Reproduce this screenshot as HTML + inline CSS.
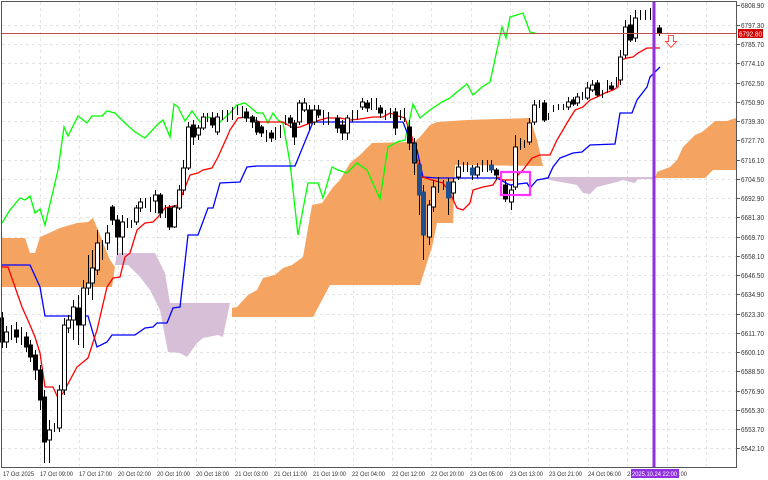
<!DOCTYPE html>
<html><head><meta charset="utf-8"><style>
html,body{margin:0;padding:0;background:#fff;}
svg{display:block;font-family:"Liberation Sans",sans-serif;}
</style></head><body>
<svg width="768" height="480" viewBox="0 0 768 480" xmlns="http://www.w3.org/2000/svg">
<rect width="768" height="480" fill="#fff"/>
<g stroke="#e4e4e4" stroke-width="1" stroke-dasharray="3,3">
<line x1="40.5" y1="2" x2="40.5" y2="466"/><line x1="79.5" y1="2" x2="79.5" y2="466"/><line x1="118.5" y1="2" x2="118.5" y2="466"/><line x1="157.5" y1="2" x2="157.5" y2="466"/><line x1="196.5" y1="2" x2="196.5" y2="466"/><line x1="235.5" y1="2" x2="235.5" y2="466"/><line x1="275.5" y1="2" x2="275.5" y2="466"/><line x1="314.5" y1="2" x2="314.5" y2="466"/><line x1="353.5" y1="2" x2="353.5" y2="466"/><line x1="392.5" y1="2" x2="392.5" y2="466"/><line x1="431.5" y1="2" x2="431.5" y2="466"/><line x1="471.5" y1="2" x2="471.5" y2="466"/><line x1="510.5" y1="2" x2="510.5" y2="466"/><line x1="549.5" y1="2" x2="549.5" y2="466"/><line x1="588.5" y1="2" x2="588.5" y2="466"/><line x1="627.5" y1="2" x2="627.5" y2="466"/><line x1="667.5" y1="2" x2="667.5" y2="466"/><line x1="706.5" y1="2" x2="706.5" y2="466"/>
<line x1="2" y1="25.5" x2="736" y2="25.5"/><line x1="2" y1="44.5" x2="736" y2="44.5"/><line x1="2" y1="63.5" x2="736" y2="63.5"/><line x1="2" y1="83.5" x2="736" y2="83.5"/><line x1="2" y1="102.5" x2="736" y2="102.5"/><line x1="2" y1="121.5" x2="736" y2="121.5"/><line x1="2" y1="140.5" x2="736" y2="140.5"/><line x1="2" y1="160.5" x2="736" y2="160.5"/><line x1="2" y1="179.5" x2="736" y2="179.5"/><line x1="2" y1="198.5" x2="736" y2="198.5"/><line x1="2" y1="217.5" x2="736" y2="217.5"/><line x1="2" y1="237.5" x2="736" y2="237.5"/><line x1="2" y1="256.5" x2="736" y2="256.5"/><line x1="2" y1="275.5" x2="736" y2="275.5"/><line x1="2" y1="294.5" x2="736" y2="294.5"/><line x1="2" y1="314.5" x2="736" y2="314.5"/><line x1="2" y1="333.5" x2="736" y2="333.5"/><line x1="2" y1="352.5" x2="736" y2="352.5"/><line x1="2" y1="371.5" x2="736" y2="371.5"/><line x1="2" y1="391.5" x2="736" y2="391.5"/><line x1="2" y1="410.5" x2="736" y2="410.5"/><line x1="2" y1="429.5" x2="736" y2="429.5"/><line x1="2" y1="448.5" x2="736" y2="448.5"/>
</g>
<g fill="#f4a460">
<polygon points="2,238 25,238 30,253 35,253 40,237 47,234 60,228 77,223 88,222 93,218 98,230 110,260 115,267 112,287 2,287"/>
<polygon points="232,308 237,307 248,295 257,290 263,278 275,275 283,268 292,265 303,257 312,205 322,203 333,187 340,180 350,163 360,155 372,143 408,142 413,143 420,137 430,125 437,122 467,120 530,118 537,140 543,166 455,165 453,223 437,223 432,247 420,285 330,285 313,317 232,317"/>
<polygon points="655,178 657,172 670,167 677,160 683,147 690,140 695,135 702,132 707,128 715,121 727,121 736,118 736,170 713,170 705,178"/>
</g>
<g fill="#d8bfd8">
<polygon points="115,265 117,253 155,253 165,273 170,303 230,303 223,337 218,335 203,338 197,343 187,357 180,353 168,352 160,310 150,290 140,277 128,265"/>
<polygon points="543,177 623,177 653,177 653,179 638,179 635,183 630,182 623,180 617,182 597,187 590,194 583,193 577,185 550,180"/>
</g>
<polyline fill="none" stroke="#00ff00" stroke-width="1.3" points="2,223 10,210 20,198 25,200 30,196 35,213 40,209 45,225 58,170 64,127 68,136 78,116 87,123 92,116 102,116 107,111 115,113 125,123 135,132 145,138 157,125 163,120 170,137 174,104 178,107 185,121 192,111 200,122 208,117 220,122 230,113 237,105 245,103 250,107 257,113 263,113 268,123 273,113 278,120 283,123 290,163 298,235 308,183 318,183 323,198 332,167 338,170 347,173 357,163 367,170 380,199 388,147 397,142 405,140 413,104 420,118 430,110 442,102 450,98 457,92 467,84 473,95 482,87 490,82 497,50 502,27 506,38 510,17 523,13 530,32 535,33"/>
<polyline fill="none" stroke="#0000ff" stroke-width="1.3" points="2,265 30,265 40,287 45,316 88,316 97,347 107,342 112,335 135,335 145,328 153,327 157,323 167,323 173,308 180,307 188,235 198,235 208,208 213,208 220,183 240,182 247,167 257,166 295,166 313,122 403,122 410,140 417,150 423,177 437,178 497,178 510,185 527,183 530,188 537,180 548,178 553,167 560,158 573,153 582,152 590,145 615,144 620,113 632,113 637,100 647,87 650,77 660,67"/>
<polyline fill="none" stroke="#ff0000" stroke-width="1.3" points="2,267 8,267 15,287 22,307 30,325 35,337 40,353 45,387 53,387 58,398 63,393 77,367 88,358 97,330 107,287 113,278 120,277 125,257 130,253 137,230 145,223 153,222 158,217 165,208 178,205 190,175 198,173 203,170 212,168 218,157 227,137 230,130 238,118 247,117 260,122 273,122 283,122 293,128 300,127 313,122 327,118 340,118 350,120 360,119 373,117 383,117 390,113 398,116 405,118 412,137 415,150 418,163 422,177 432,180 443,183 450,193 457,208 463,210 470,203 473,190 483,187 493,185 498,177 503,180 513,180 523,170 532,158 540,155 550,155 557,140 567,123 575,110 583,107 590,100 597,97 605,93 613,90 618,87 621,60 627,58 633,57 638,53 647,48 660,48"/>
<g stroke="#000" stroke-width="1" fill="#fff">
<path fill="none" d="M2.5 312V348M6.5 326V348M11.5 325V340M16.5 322V343M21.5 327V345M26.5 332V352M30.5 340V362M35.5 350V380M40.5 365V410M44.5 390V463M49.5 420V463M54.5 423V432M59.5 385V432M64.5 318V395M68.5 315V333M73.5 300V340M78.5 295V345M83.5 280V348M88.5 255V295M92.5 250V300M97.5 230V275M102.5 240V260M107.5 225V250M112.5 205V225M117.5 215V255M122.5 215V255M127.5 218V228M131.5 220V228M136.5 205V225M140.5 198V212M145.5 198V208M150.5 197V212M155.5 190V213M160.5 193V218M165.5 205V218M169.5 205V230M174.5 205V228M179.5 185V210M183.5 160V195M188.5 122V170M193.5 120V145M198.5 125V140M203.5 113V130M207.5 113V122M212.5 112V128M217.5 113V135M222.5 110V120M227.5 110V122M232.5 107V120M237.5 105V115M242.5 106V118M246.5 108V122M252.5 115V128M256.5 117V135M261.5 125V137M266.5 130V142M271.5 130V142M275.5 127V140M280.5 125V138M285.5 115V125M290.5 115V128M294.5 120V145M299.5 100V125M304.5 98V112M309.5 105V130M314.5 105V125M318.5 105V118M323.5 110V125M328.5 112V125M337.5 115V133M342.5 120V140M347.5 115V140M352.5 110V122M357.5 110V120M362.5 98V110M367.5 100V112M371.5 98V110M376.5 98V110M380.5 105V118M385.5 110V120M390.5 108V118M395.5 108V135M400.5 110V120M404.5 108V122M409.5 120V150M414.5 138V175M419.5 160V215M423.5 185V260M429.5 200V245M433.5 180V212M438.5 177V193M443.5 180V190M448.5 178V215M453.5 178V200M458.5 160V180M463.5 162V172M467.5 162V172M472.5 165V180M477.5 163V178M482.5 160V172M487.5 160V172M491.5 160V173M496.5 168V180M505.5 180V202M511.5 185V210M515.5 135V190M520.5 138V150M524.5 140V148M529.5 118V145M534.5 100V125M539.5 100V108M544.5 100V122M548.5 113V120M553.5 105V112M558.5 104V110M563.5 104V110M568.5 97V110M573.5 97V106M577.5 93V106M582.5 92V100M587.5 82V100M592.5 80V92M597.5 80V97M602.5 90V98M607.5 80V93M611.5 82V90M616.5 77V87M620.5 50V85M625.5 20V58M630.5 15V42M635.5 10V42M640.5 10V20M645.5 10V20M650.5 8V20M659.5 25V36"/>
<rect x="0.5" y="318" width="3" height="24" fill="#000"/><rect x="4.5" y="332" width="4" height="10"/><rect x="14.5" y="330" width="4" height="7" fill="#000"/><rect x="24.5" y="337" width="4" height="10" fill="#000"/><rect x="28.5" y="345" width="4" height="12" fill="#000"/><rect x="33.5" y="355" width="4" height="15" fill="#000"/><rect x="38.5" y="370" width="4" height="30" fill="#000"/><rect x="42.5" y="397" width="4" height="45" fill="#000"/><rect x="47.5" y="430" width="4" height="10"/><rect x="57.5" y="390" width="4" height="38"/><rect x="62.5" y="325" width="4" height="65"/><rect x="66.5" y="320" width="4" height="8"/><rect x="71.5" y="307" width="4" height="13"/><rect x="76.5" y="308" width="4" height="17" fill="#000"/><rect x="81.5" y="288" width="4" height="37"/><rect x="86.5" y="283" width="4" height="5"/><rect x="90.5" y="268" width="4" height="15"/><rect x="95.5" y="243" width="4" height="27"/><rect x="105.5" y="233" width="4" height="10"/><rect x="110.5" y="207" width="4" height="13" fill="#000"/><rect x="115.5" y="220" width="4" height="17" fill="#000"/><rect x="120.5" y="222" width="4" height="15"/><rect x="134.5" y="208" width="4" height="14"/><rect x="138.5" y="202" width="4" height="6"/><rect x="153.5" y="195" width="4" height="6"/><rect x="158.5" y="195" width="4" height="18" fill="#000"/><rect x="167.5" y="208" width="4" height="19" fill="#000"/><rect x="172.5" y="207" width="4" height="20"/><rect x="177.5" y="190" width="4" height="18"/><rect x="181.5" y="168" width="4" height="22"/><rect x="186.5" y="127" width="4" height="41"/><rect x="191.5" y="125" width="4" height="12" fill="#000"/><rect x="196.5" y="128" width="4" height="7"/><rect x="201.5" y="117" width="4" height="11"/><rect x="210.5" y="118" width="4" height="7" fill="#000"/><rect x="215.5" y="117" width="4" height="15"/><rect x="244.5" y="112" width="4" height="6" fill="#000"/><rect x="250.5" y="117" width="4" height="5" fill="#000"/><rect x="255.5" y="122" width="4" height="10" fill="#000"/><rect x="259.5" y="127" width="4" height="6" fill="#000"/><rect x="269.5" y="133" width="4" height="5" fill="#000"/><rect x="288.5" y="118" width="4" height="5" fill="#000"/><rect x="292.5" y="123" width="4" height="14" fill="#000"/><rect x="297.5" y="103" width="4" height="19"/><rect x="302.5" y="103" width="4" height="7"/><rect x="307.5" y="110" width="4" height="13" fill="#000"/><rect x="312.5" y="110" width="4" height="12"/><rect x="316.5" y="110" width="4" height="5" fill="#000"/><rect x="335.5" y="118" width="4" height="10" fill="#000"/><rect x="340.5" y="125" width="4" height="8" fill="#000"/><rect x="345.5" y="118" width="4" height="15"/><rect x="360.5" y="102" width="4" height="5"/><rect x="365.5" y="103" width="4" height="5" fill="#000"/><rect x="378.5" y="108" width="4" height="5" fill="#000"/><rect x="393.5" y="112" width="4" height="16" fill="#000"/><rect x="407.5" y="127" width="4" height="16" fill="#000"/><rect x="412.5" y="143" width="4" height="20" fill="#1f4f8f"/><rect x="417.5" y="165" width="4" height="30" fill="#1f4f8f" stroke="#1f4f8f"/><rect x="421.5" y="192" width="4" height="43" fill="#1f4f8f" stroke="#1f4f8f"/><rect x="427.5" y="205" width="4" height="32"/><rect x="431.5" y="187" width="4" height="20"/><rect x="446.5" y="182" width="4" height="16" fill="#1f4f8f" stroke="#1f4f8f"/><rect x="451.5" y="182" width="4" height="11"/><rect x="456.5" y="167" width="4" height="10"/><rect x="470.5" y="168" width="4" height="7" fill="#1f4f8f" stroke="#1f4f8f"/><rect x="475.5" y="167" width="4" height="8"/><rect x="489.5" y="165" width="4" height="5" fill="#1f4f8f" stroke="#1f4f8f"/><rect x="494.5" y="170" width="4" height="5" fill="#000"/><rect x="503.5" y="185" width="4" height="14" fill="#000"/><rect x="509.5" y="190" width="4" height="12"/><rect x="513.5" y="147" width="4" height="40"/><rect x="527.5" y="123" width="4" height="19"/><rect x="532.5" y="105" width="4" height="17"/><rect x="542.5" y="103" width="4" height="17" fill="#000"/><rect x="566.5" y="102" width="4" height="5"/><rect x="571.5" y="100" width="4" height="4" fill="#000"/><rect x="575.5" y="97" width="4" height="6"/><rect x="585.5" y="88" width="4" height="10"/><rect x="590.5" y="85" width="4" height="5"/><rect x="595.5" y="83" width="4" height="12" fill="#000"/><rect x="609.5" y="86" width="4" height="3" fill="#000"/><rect x="618.5" y="57" width="4" height="23"/><rect x="623.5" y="27" width="4" height="28"/><rect x="628.5" y="25" width="4" height="15" fill="#000"/><rect x="633.5" y="18" width="4" height="20"/><rect x="657.5" y="28" width="4" height="5" fill="#000"/>
</g>
<rect x="501" y="172" width="29" height="23" fill="none" stroke="#ff33ff" stroke-width="2.2"/>
<line x1="2" y1="33.5" x2="736" y2="33.5" stroke="#c05050" stroke-width="1"/>
<path d="M668.5 35.5h5v6h3l-5.5 6-5.5-6h3z" fill="#fff" stroke="#ff5050" stroke-width="1"/>
<rect x="652.5" y="2" width="3" height="465" fill="#9030e0"/>
<path d="M1.5 1.5H736.5V467.5H1.5Z" fill="none" stroke="#555" stroke-width="1"/>
<g font-size="7" fill="#333">
<text x="741" y="8" textLength="23" lengthAdjust="spacingAndGlyphs">6808.90</text><text x="741" y="28" textLength="23" lengthAdjust="spacingAndGlyphs">6797.30</text><text x="741" y="47" textLength="23" lengthAdjust="spacingAndGlyphs">6785.70</text><text x="741" y="66" textLength="23" lengthAdjust="spacingAndGlyphs">6774.10</text><text x="741" y="86" textLength="23" lengthAdjust="spacingAndGlyphs">6762.50</text><text x="741" y="105" textLength="23" lengthAdjust="spacingAndGlyphs">6750.90</text><text x="741" y="124" textLength="23" lengthAdjust="spacingAndGlyphs">6739.30</text><text x="741" y="143" textLength="23" lengthAdjust="spacingAndGlyphs">6727.70</text><text x="741" y="163" textLength="23" lengthAdjust="spacingAndGlyphs">6716.10</text><text x="741" y="182" textLength="23" lengthAdjust="spacingAndGlyphs">6704.50</text><text x="741" y="201" textLength="23" lengthAdjust="spacingAndGlyphs">6692.90</text><text x="741" y="220" textLength="23" lengthAdjust="spacingAndGlyphs">6681.30</text><text x="741" y="240" textLength="23" lengthAdjust="spacingAndGlyphs">6669.70</text><text x="741" y="259" textLength="23" lengthAdjust="spacingAndGlyphs">6658.10</text><text x="741" y="278" textLength="23" lengthAdjust="spacingAndGlyphs">6646.50</text><text x="741" y="297" textLength="23" lengthAdjust="spacingAndGlyphs">6634.90</text><text x="741" y="317" textLength="23" lengthAdjust="spacingAndGlyphs">6623.30</text><text x="741" y="336" textLength="23" lengthAdjust="spacingAndGlyphs">6611.70</text><text x="741" y="355" textLength="23" lengthAdjust="spacingAndGlyphs">6600.10</text><text x="741" y="374" textLength="23" lengthAdjust="spacingAndGlyphs">6588.50</text><text x="741" y="394" textLength="23" lengthAdjust="spacingAndGlyphs">6576.90</text><text x="741" y="413" textLength="23" lengthAdjust="spacingAndGlyphs">6565.30</text><text x="741" y="432" textLength="23" lengthAdjust="spacingAndGlyphs">6553.70</text><text x="741" y="451" textLength="23" lengthAdjust="spacingAndGlyphs">6542.10</text>
</g>
<g stroke="#555"><path d="M737 5.5h3M737 25.5h3M737 44.5h3M737 63.5h3M737 83.5h3M737 102.5h3M737 121.5h3M737 140.5h3M737 160.5h3M737 179.5h3M737 198.5h3M737 217.5h3M737 237.5h3M737 256.5h3M737 275.5h3M737 294.5h3M737 314.5h3M737 333.5h3M737 352.5h3M737 371.5h3M737 391.5h3M737 410.5h3M737 429.5h3M737 448.5h3"/></g>
<rect x="738" y="29" width="25" height="9" fill="#d00000"/>
<text x="739" y="36.5" font-size="7" fill="#fff" textLength="23" lengthAdjust="spacingAndGlyphs">6792.80</text>
<g font-size="6.5" fill="#333">
<text x="3" y="476" textLength="31" lengthAdjust="spacingAndGlyphs">17 Oct 2025</text><text x="40" y="476" textLength="33" lengthAdjust="spacingAndGlyphs">17 Oct 09:00</text><text x="79" y="476" textLength="33" lengthAdjust="spacingAndGlyphs">17 Oct 17:00</text><text x="118" y="476" textLength="33" lengthAdjust="spacingAndGlyphs">20 Oct 02:00</text><text x="157" y="476" textLength="33" lengthAdjust="spacingAndGlyphs">20 Oct 10:00</text><text x="196" y="476" textLength="33" lengthAdjust="spacingAndGlyphs">20 Oct 18:00</text><text x="235" y="476" textLength="33" lengthAdjust="spacingAndGlyphs">21 Oct 03:00</text><text x="274" y="476" textLength="33" lengthAdjust="spacingAndGlyphs">21 Oct 11:00</text><text x="313" y="476" textLength="33" lengthAdjust="spacingAndGlyphs">21 Oct 19:00</text><text x="352" y="476" textLength="33" lengthAdjust="spacingAndGlyphs">22 Oct 04:00</text><text x="392" y="476" textLength="33" lengthAdjust="spacingAndGlyphs">22 Oct 12:00</text><text x="431" y="476" textLength="33" lengthAdjust="spacingAndGlyphs">22 Oct 20:00</text><text x="470" y="476" textLength="33" lengthAdjust="spacingAndGlyphs">23 Oct 05:00</text><text x="510" y="476" textLength="33" lengthAdjust="spacingAndGlyphs">23 Oct 13:00</text><text x="549" y="476" textLength="33" lengthAdjust="spacingAndGlyphs">23 Oct 21:00</text><text x="588" y="476" textLength="33" lengthAdjust="spacingAndGlyphs">24 Oct 06:00</text><text x="627" y="476">24 Oc</text><text x="679" y="476" textLength="8" lengthAdjust="spacingAndGlyphs">:00</text>
</g>
<rect x="631" y="469" width="48" height="9" fill="#9030e0"/>
<text x="632" y="476" font-size="6.5" fill="#fff" textLength="45" lengthAdjust="spacingAndGlyphs">2025.10.24 22:00</text>
</svg>
</body></html>
